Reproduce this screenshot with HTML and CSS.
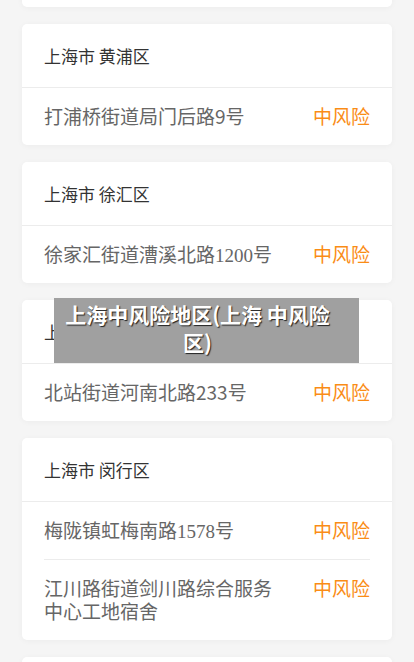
FILE: index.html
```html
<!DOCTYPE html>
<html lang="zh-CN">
<head>
    <meta charset="UTF-8">
    <meta name="viewport" content="width=device-width, initial-scale=1.0">
    <title>上海中风险地区</title>
    <link rel="stylesheet" href="styles.css">
</head>
<body>
    <div class="list">
        <div class="card card-cut">
            <div class="card-head">上海市 黄浦区</div>
            <div class="row"><span class="addr">南京东路街道</span><span class="risk">中风险</span></div>
        </div>

        <div class="card">
            <div class="card-head">上海市 黄浦区</div>
            <div class="row"><span class="addr">打浦桥街道局门后路9号</span><span class="risk">中风险</span></div>
        </div>

        <div class="card">
            <div class="card-head">上海市 徐汇区</div>
            <div class="row"><span class="addr">徐家汇街道漕溪北路<span class="serif">1200</span>号</span><span class="risk">中风险</span></div>
        </div>

        <div class="card">
            <div class="card-head">上海市 静安区</div>
            <div class="row"><span class="addr">北站街道河南北路233号</span><span class="risk">中风险</span></div>
        </div>

        <div class="card">
            <div class="card-head">上海市 闵行区</div>
            <div class="row"><span class="addr">梅陇镇虹梅南路<span class="serif">1578</span>号</span><span class="risk">中风险</span></div>
            <div class="row"><span class="addr">江川路街道剑川路综合服务中心工地宿舍</span><span class="risk">中风险</span></div>
        </div>

        <div class="card">
            <div class="card-head">上海市 浦东新区</div>
        </div>
    </div>

    <!-- 标题浮层 -->
    <div class="title-tip">上海中风险地区(上海 中风险区)</div>
</body>
</html>
```

FILE: styles.css
```css
* {
    margin: 0;
    padding: 0;
    box-sizing: border-box;
}

html, body {
    height: 100%;
    overflow: hidden;
}

body {
    background: #f5f5f5;
    font-family: "Noto Sans CJK SC", "Noto Sans", sans-serif;
    position: relative;
}

.list {
    padding: 0 22px;
    margin-top: -114px;
    display: flex;
    flex-direction: column;
    gap: 17px;
}

.card {
    background: #fff;
    border-radius: 5px;
    box-shadow: 0 1px 6px rgba(0, 0, 0, 0.04);
}

.card-head {
    padding: 20px 22px;
    font-size: 17px;
    line-height: 23px;
    color: #333;
    border-bottom: 1px solid #ececec;
}

.row {
    margin: 0 22px;
    padding: 16px 0 18px;
    display: flex;
    align-items: flex-start;
    justify-content: space-between;
    gap: 30px;
    font-size: 19px;
    line-height: 23px;
}

.row + .row {
    border-top: 1px solid #ececec;
}

.addr {
    flex: 1;
    color: #666;
}

.serif {
    font-family: "Liberation Serif", serif;
    line-height: 0;
}

.risk {
    color: #fa8c16;
    flex-shrink: 0;
}

.title-tip {
    position: absolute;
    top: 298px;
    left: 54px;
    width: 305px;
    height: 65px;
    padding: 2px 20px 2px 2px;
    background: #a0a0a0;
    color: #fff;
    font-size: 21px;
    font-weight: bold;
    line-height: 28px;
    text-align: center;
    text-shadow: 1px 1px 1px #222;
}
```
